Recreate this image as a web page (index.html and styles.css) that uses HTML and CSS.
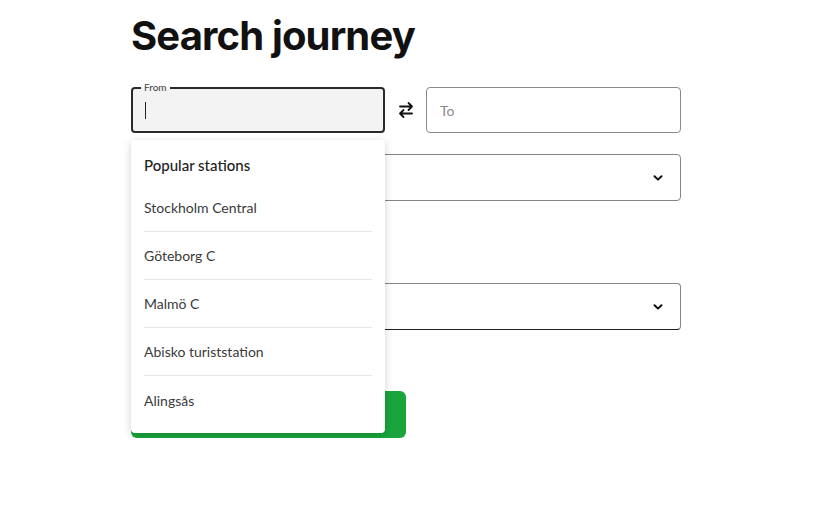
FILE: index.html
```html
<!DOCTYPE html>
<html lang="en">
<head>
<meta charset="utf-8">
<title>Search journey</title>
<link rel="stylesheet" href="styles.css">
</head>
<body>
<main class="page">
  <h1 class="title">Search journey</h1>
  <form class="form">
    <div class="route">
      <div class="field field--active">
        <span class="field-label">From</span>
        <span class="caret"></span>
        <div class="dropdown">
          <div class="dropdown-heading">Popular stations</div>
          <ul class="station-list">
            <li class="station">Stockholm Central</li>
            <li class="station">Göteborg C</li>
            <li class="station">Malmö C</li>
            <li class="station">Abisko turiststation</li>
            <li class="station">Alingsås</li>
          </ul>
        </div>
      </div>
      <button type="button" class="swap" aria-label="Swap">
        <svg width="16" height="18" viewBox="0 0 16 18" fill="none" stroke="#111" stroke-width="1.8" stroke-linecap="round" stroke-linejoin="round">
          <path d="M2 5.5h12M10.5 2l3.5 3.5-3.5 3.5"/>
          <path d="M14 12.5H2M5.5 9L2 12.5 5.5 16"/>
        </svg>
      </button>
      <div class="field field--to">
        <span class="placeholder">To</span>
      </div>
    </div>
    <div class="select">
      <svg class="chevron" width="10" height="6" viewBox="0 0 10 6" fill="none" stroke="#111" stroke-width="2" stroke-linecap="round" stroke-linejoin="round"><path d="M1.5 1.2L5 4.6 8.5 1.2"/></svg>
    </div>
    <div class="spacer"></div>
    <div class="select select--second">
      <svg class="chevron" width="10" height="6" viewBox="0 0 10 6" fill="none" stroke="#111" stroke-width="2" stroke-linecap="round" stroke-linejoin="round"><path d="M1.5 1.2L5 4.6 8.5 1.2"/></svg>
    </div>
    <button type="button" class="search-btn">Search</button>
  </form>
</main>
</body>
</html>
```

FILE: styles.css
```css
* { box-sizing: border-box; }

html, body {
  margin: 0;
  background: #fff;
}

body {
  font-family: Lato, "Open Sans", Arial, sans-serif;
  color: #2b2b2b;
}

.page {
  padding: 9px 0 0 131px;
  width: 681px;
}

.title {
  margin: 0;
  font-family: Inter, "Open Sans", Arial, sans-serif;
  font-weight: 700;
  font-size: 40px;
  line-height: 54px;
  letter-spacing: -0.85px;
  color: #111;
}

.form {
  margin-top: 24px;
  display: flex;
  flex-direction: column;
}

.route {
  display: grid;
  grid-template-columns: 254px 41px 1fr;
  align-items: center;
}

.field {
  position: relative;
  height: 46px;
  border-radius: 4px;
  display: flex;
  align-items: center;
}

.field--active {
  border: 2px solid #2a2a2a;
  background: #f3f3f3;
  padding-left: 12px;
}

.field-label {
  position: absolute;
  top: -8px;
  left: 8px;
  padding: 0 3px;
  font-size: 10px;
  line-height: 12px;
  color: #444;
  background: linear-gradient(#fff 0 50%, #f3f3f3 50% 100%);
}

.caret {
  width: 1px;
  height: 17px;
  background: #222;
}

.field--to {
  border: 1.5px solid #8a8a8a;
  padding-left: 13px;
  background: #fff;
}

.placeholder {
  font-size: 14px;
  color: #8a8a8a;
}

.swap {
  border: 0;
  background: none;
  padding: 0;
  display: flex;
  justify-content: center;
  align-items: center;
  height: 46px;
}

.select {
  margin-top: 21px;
  height: 47px;
  border: 1.5px solid #858585;
  border-radius: 4px;
  display: flex;
  justify-content: flex-end;
  align-items: center;
  padding-right: 17px;
}

.select--second {
  margin-top: 0;
  border-bottom-color: #222;
}

.spacer {
  height: 82px;
}

.search-btn {
  margin-top: 61px;
  width: 275px;
  height: 47px;
  border: 0;
  border-radius: 6px;
  background: #19a53c;
  color: #fff;
  font-family: Lato, Arial, sans-serif;
  font-size: 16px;
  font-weight: 700;
}

.dropdown {
  position: absolute;
  left: -2px;
  right: -2px;
  top: calc(100% + 9px);
  background: #fff;
  border-radius: 4px;
  box-shadow: 0 2px 8px rgba(0, 0, 0, 0.18);
  padding: 14px 13px 9px;
  z-index: 2;
}

.dropdown-heading {
  font-size: 15px;
  font-weight: 500;
  line-height: 22px;
  color: #222;
  padding-bottom: 8px;
}

.station-list {
  list-style: none;
  margin: 0;
  padding: 0;
}

.station {
  height: 48px;
  display: flex;
  align-items: center;
  font-size: 14px;
  color: #3a3a3a;
  border-bottom: 1px solid #e6e6e6;
}

.station:last-child {
  border-bottom: 0;
}
```
